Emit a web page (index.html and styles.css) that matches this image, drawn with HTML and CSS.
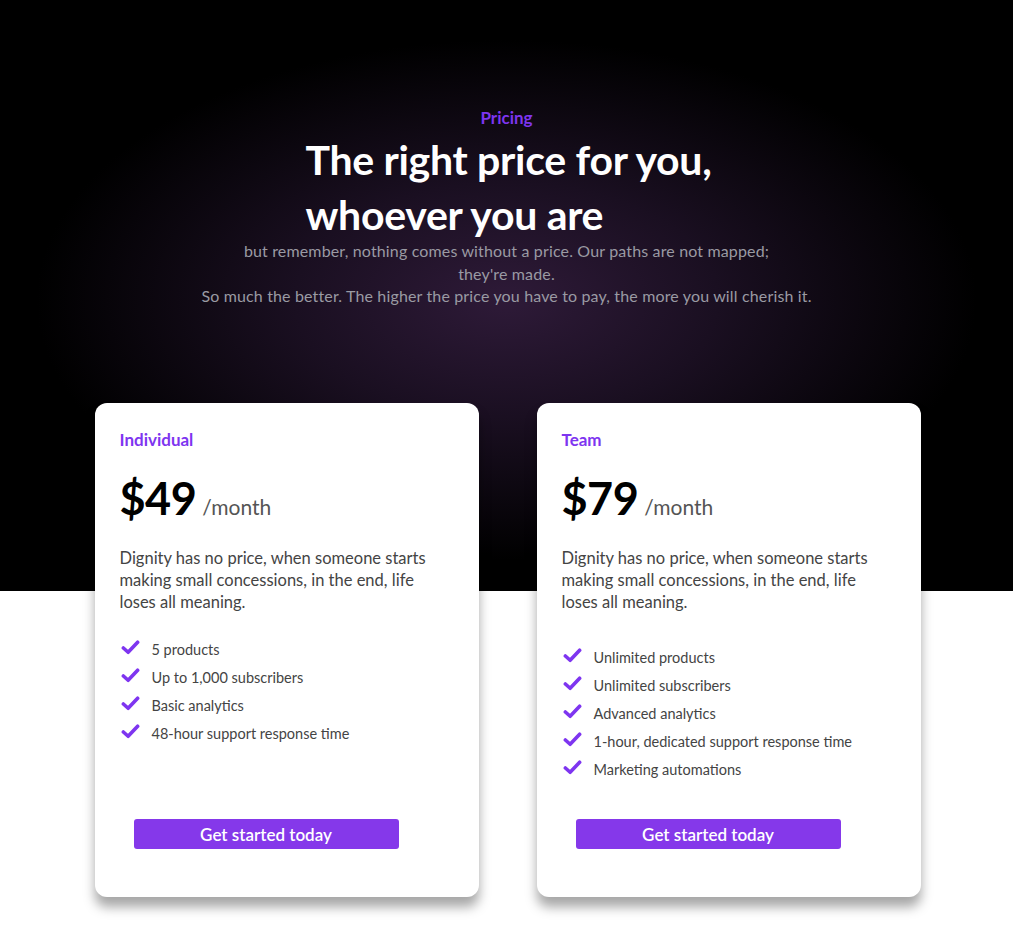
FILE: index.html
```html
<!DOCTYPE html>
<html lang="en">
<head>
<meta charset="utf-8">
<title>Pricing</title>
<link rel="stylesheet" href="styles.css">
</head>
<body>
<section class="hero">
  <p class="eyebrow">Pricing</p>
  <h1 class="title">The right price for you,<br>whoever you are</h1>
  <p class="lead">but remember, nothing comes without a price. Our paths are not mapped;<br>they're made.<br>So much the better. The higher the price you have to pay, the more you will cherish it.</p>
</section>
<section class="plans">
  <article class="card">
    <h2 class="plan-name">Individual</h2>
    <p class="price"><span class="amount">$49</span> <span class="period">/month</span></p>
    <p class="desc">Dignity has no price, when someone starts making small concessions, in the end, life loses all meaning.</p>
    <ul class="features">
      <li><svg class="check" viewBox="0 0 20 20"><path d="M2.5 10.5 L7.5 15 L17.5 4.5" /></svg>5 products</li>
      <li><svg class="check" viewBox="0 0 20 20"><path d="M2.5 10.5 L7.5 15 L17.5 4.5" /></svg>Up to 1,000 subscribers</li>
      <li><svg class="check" viewBox="0 0 20 20"><path d="M2.5 10.5 L7.5 15 L17.5 4.5" /></svg>Basic analytics</li>
      <li><svg class="check" viewBox="0 0 20 20"><path d="M2.5 10.5 L7.5 15 L17.5 4.5" /></svg>48-hour support response time</li>
    </ul>
    <button class="cta">Get started today</button>
  </article>
  <article class="card">
    <h2 class="plan-name">Team</h2>
    <p class="price"><span class="amount">$79</span> <span class="period">/month</span></p>
    <p class="desc">Dignity has no price, when someone starts making small concessions, in the end, life loses all meaning.</p>
    <ul class="features features-team">
      <li><svg class="check" viewBox="0 0 20 20"><path d="M2.5 10.5 L7.5 15 L17.5 4.5" /></svg>Unlimited products</li>
      <li><svg class="check" viewBox="0 0 20 20"><path d="M2.5 10.5 L7.5 15 L17.5 4.5" /></svg>Unlimited subscribers</li>
      <li><svg class="check" viewBox="0 0 20 20"><path d="M2.5 10.5 L7.5 15 L17.5 4.5" /></svg>Advanced analytics</li>
      <li><svg class="check" viewBox="0 0 20 20"><path d="M2.5 10.5 L7.5 15 L17.5 4.5" /></svg>1-hour, dedicated support response time</li>
      <li><svg class="check" viewBox="0 0 20 20"><path d="M2.5 10.5 L7.5 15 L17.5 4.5" /></svg>Marketing automations</li>
    </ul>
    <button class="cta">Get started today</button>
  </article>
</section>
</body>
</html>
```
FILE: styles.css
```css
* { box-sizing: border-box; }
html, body { margin: 0; padding: 0; }
body {
  font-family: "Lato", "Noto Sans", sans-serif;
  background: #fff;
  color: #333;
}
.hero {
  height: 591px;
  padding-top: 107px;
  text-align: center;
  background: radial-gradient(ellipse 470px 260px at 50% 300px, #2e1a38 0%, #1a0f21 45%, #000 100%);
}
.eyebrow {
  margin: 0;
  color: #7e35f0;
  font-weight: 700;
  font-size: 17px;
  line-height: 22px;
}
.title {
  margin: 3px auto 0;
  width: 404px;
  text-align: left;
  white-space: nowrap;
  color: #fff;
  font-weight: 700;
  font-size: 41px;
  line-height: 55px;
  letter-spacing: -0.3px;
  transform: translateX(1px);
}
.lead {
  margin: -2px 0 0;
  color: #9a9aa3;
  font-size: 16px;
  line-height: 22.5px;
  letter-spacing: 0.15px;
}
.plans {
  margin-top: -188px;
  display: flex;
  justify-content: center;
  gap: 58px;
  padding-bottom: 50px;
  transform: translateX(1px);
}
.card {
  width: 384px;
  height: 494px;
  background: #fff;
  border-radius: 12px;
  padding: 25px 25px 48px;
  box-shadow: 0 10px 12px rgba(0, 0, 0, 0.35);
  display: flex;
  flex-direction: column;
}
.plan-name {
  margin: 0;
  color: #7e35f0;
  font-size: 17px;
  line-height: 24px;
  font-weight: 700;
}
.price {
  margin: 19px 0 0;
  display: flex;
  align-items: baseline;
  gap: 6px;
}
.amount {
  color: #000;
  font-size: 45px;
  font-weight: 700;
  line-height: 54px;
  letter-spacing: -0.5px;
}
.period {
  color: #555;
  font-size: 21px;
}
.desc {
  margin: 22px 0 0;
  color: #444;
  font-size: 16.5px;
  line-height: 22px;
}
.features {
  list-style: none;
  margin: 22px 0 0;
  padding: 0;
}
.features-team { margin-top: 30px; }
.features li {
  display: flex;
  align-items: center;
  height: 28px;
  color: #444;
  font-size: 14.5px;
}
.check {
  width: 19px;
  height: 19px;
  margin-left: 1px;
  margin-right: 12px;
  margin-top: -4px;
  fill: none;
  stroke: #7e35f0;
  stroke-width: 3.8;
  stroke-linecap: round;
  stroke-linejoin: round;
}
.cta {
  margin-top: auto;
  margin-left: 14px;
  width: 265px;
  height: 30px;
  border: none;
  border-radius: 3px;
  background: #8538ea;
  color: #fff;
  font-family: inherit;
  font-size: 17px;
  font-weight: 600;
  cursor: pointer;
}
```
